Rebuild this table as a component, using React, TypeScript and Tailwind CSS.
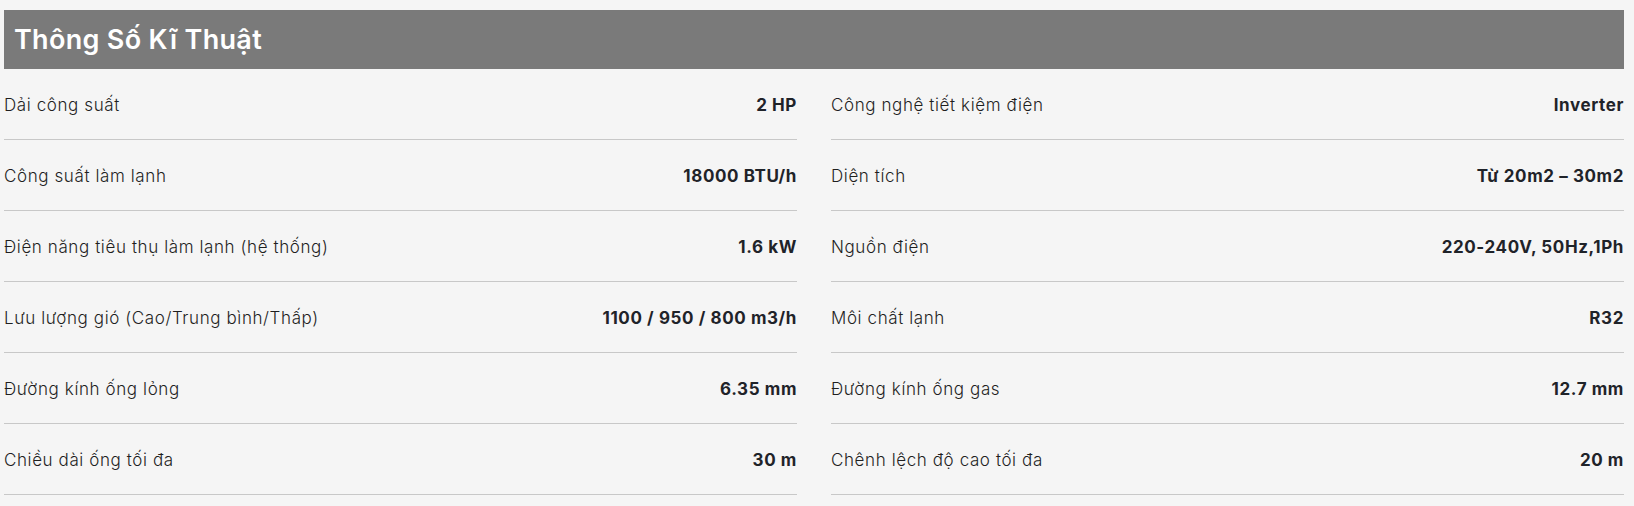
import React from "react";

const left = [
    ["Dải công suất", "2 HP"],
    ["Công suất làm lạnh", "18000 BTU/h"],
    ["Điện năng tiêu thụ làm lạnh (hệ thống)", "1.6 kW"],
    ["Lưu lượng gió (Cao/Trung bình/Thấp)", "1100 / 950 / 800 m3/h"],
    ["Đường kính ống lỏng", "6.35 mm"],
    ["Chiều dài ống tối đa", "30 m"],
];

const right = [
    ["Công nghệ tiết kiệm điện", "Inverter"],
    ["Diện tích", "Từ 20m2 – 30m2"],
    ["Nguồn điện", "220-240V, 50Hz,1Ph"],
    ["Môi chất lạnh", "R32"],
    ["Đường kính ống gas", "12.7 mm"],
    ["Chênh lệch độ cao tối đa", "20 m"],
];

function Column({ rows }: { rows: string[][] }) {
    return <div className="flex flex-col">
        {
            rows.map((x, i) => <div key={i} className="flex items-center justify-between h-[71px] pt-[4px] border-b border-[#c8c8c8]">
                <span className="text-[17px] font-light text-[#1f1f1f] tracking-[0.6px]">{x[0]}</span>
                <span className="text-[17px] font-bold text-[#1f2329] tracking-[0.6px]">{x[1]}</span>
            </div>)
        }
    </div>
}

export default function App() {
    return <div className="min-h-[506px] bg-[#f5f5f5] pt-[10px] pl-[4px] pr-[10px]" style={{ fontFamily: "Inter, 'Noto Sans', sans-serif" }}>
        <div className="h-[59px] bg-[#7a7a7a] flex items-center px-[10px] pt-[2px]">
            <h2 className="text-[27px] font-semibold text-white tracking-[0.3px]">Thông Số Kĩ Thuật</h2>
        </div>
        <div className="grid grid-cols-2 gap-[34px]">
            <Column rows={left} />
            <Column rows={right} />
        </div>
    </div>
}
